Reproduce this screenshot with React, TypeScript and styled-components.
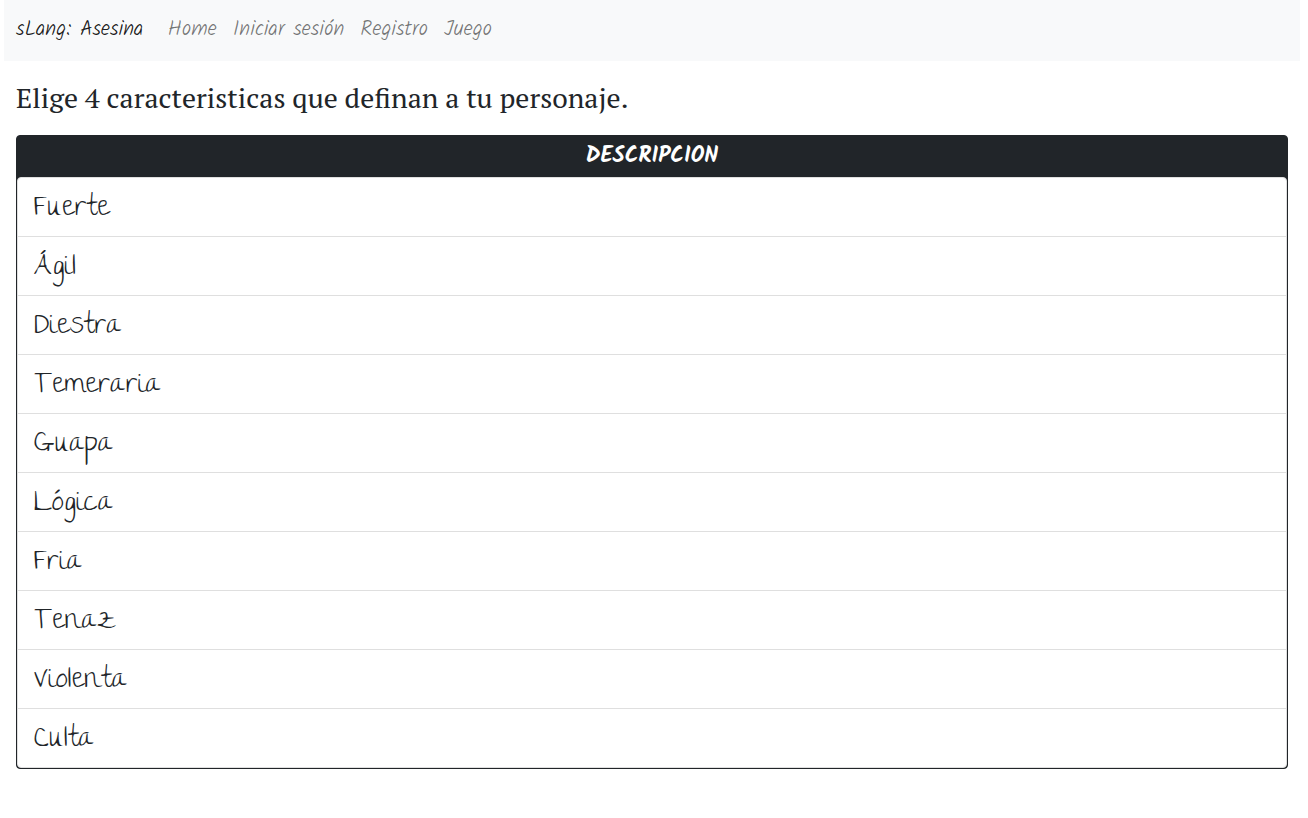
import React from "react";
import styled, { createGlobalStyle } from "styled-components";

const thinHand = `"The Girl Next Door", "Liberation Sans", cursive`;
const hand = `Kalam, "Liberation Sans", cursive`;

const GlobalStyle = createGlobalStyle`
  *, *::before, *::after { box-sizing: border-box; }
  body {
    margin: 0;
    background: #fff;
    color: #212529;
    font-family: ${hand};
    font-size: 16px;
  }
`;

const Page = styled.div`
  padding: 0 8px 24px 4px;
`;

const Navbar = styled.nav`
  display: flex;
  align-items: center;
  gap: 16px;
  min-height: 61px;
  padding: 0 12px 2px;
  background: #f8f9fa;
`;

const Brand = styled.a`
  color: rgba(0, 0, 0, 0.9);
  font-size: 21px;
  font-weight: 300;
  line-height: 28px;
  text-decoration: none;
  white-space: nowrap;
`;

const NavList = styled.ul`
  display: flex;
  flex-wrap: wrap;
  margin: 0;
  padding: 0;
  list-style: none;
`;

const NavLink = styled.a`
  display: block;
  padding: 0 8px;
  color: rgba(0, 0, 0, 0.55);
  font-size: 21px;
  font-weight: 300;
  line-height: 28px;
  text-decoration: none;
`;

const Main = styled.main`
  padding: 19px 12px 0;
`;

const Title = styled.h1`
  margin: 0 0 19px;
  font-family: "PT Serif", "Liberation Serif", serif;
  font-size: 28px;
  font-weight: 400;
  line-height: 36px;
`;

const Card = styled.section`
  border: 1px solid #212529;
  border-radius: 4px;
  background: #212529;
`;

const CardHeader = styled.h2`
  margin: 0;
  padding: 9px 16px 8px;
  color: #fff;
  font-size: 22px;
  font-weight: 700;
  line-height: 24px;
  text-align: center;
`;

const TraitList = styled.ul`
  margin: 0;
  padding: 0;
  border: 1px solid #dfdfdf;
  border-radius: 4px;
  background: #fff;
  list-style: none;
`;

const Trait = styled.li`
  padding: 11px 16px 5px;
  font-family: ${thinHand};
  font-size: 28px;
  line-height: 42px;

  & + & {
    border-top: 1px solid #dfdfdf;
  }
`;

const links = ["Home", "Iniciar sesión", "Registro", "Juego"];

const traits = [
  "Fuerte",
  "Ágil",
  "Diestra",
  "Temeraria",
  "Guapa",
  "Lógica",
  "Fria",
  "Tenaz",
  "Violenta",
  "Culta",
];

export default function App() {
  return (
    <>
      <GlobalStyle />
      <Page>
        <Navbar>
          <Brand href="#">sLang: Asesina</Brand>
          <NavList>
            {links.map((link) => (
              <li key={link}>
                <NavLink href="#">{link}</NavLink>
              </li>
            ))}
          </NavList>
        </Navbar>
        <Main>
          <Title>Elige 4 caracteristicas que definan a tu personaje.</Title>
          <Card>
            <CardHeader>DESCRIPCION</CardHeader>
            <TraitList>
              {traits.map((trait) => (
                <Trait key={trait}>{trait}</Trait>
              ))}
            </TraitList>
          </Card>
        </Main>
      </Page>
    </>
  );
}
